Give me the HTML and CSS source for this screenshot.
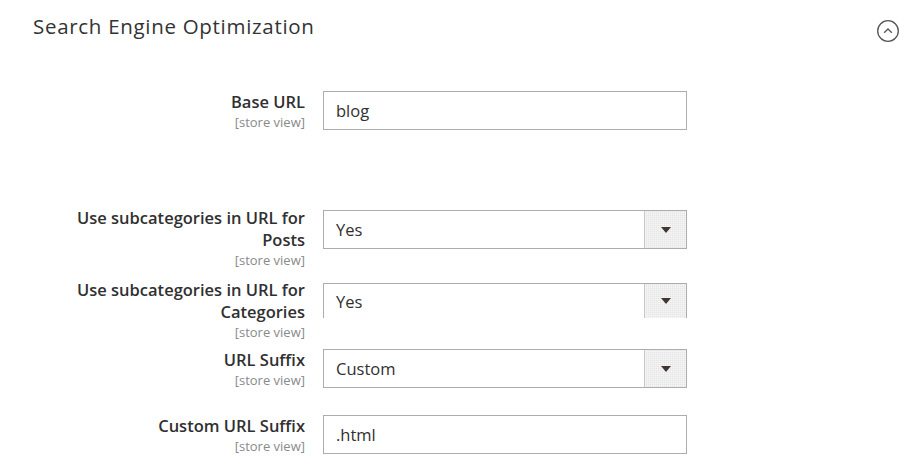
FILE: index.html
```html
<!DOCTYPE html>
<html lang="en">
<head>
<meta charset="utf-8">
<title>Search Engine Optimization</title>
<link rel="stylesheet" href="styles.css">
</head>
<body>
<section class="section">
  <header class="section-head">
    <h2 class="section-title">Search Engine Optimization</h2>
    <svg class="collapse-icon" width="24" height="24" viewBox="0 0 24 24" aria-hidden="true">
      <circle cx="12" cy="12" r="10.3" fill="none" stroke="#555" stroke-width="1.3"/>
      <path d="M8.2 13.8 L12 10 L15.8 13.8" fill="none" stroke="#555" stroke-width="1.3"/>
    </svg>
  </header>
  <div class="fields">
    <div class="row row-gap-xl">
      <div class="label"><span class="label-text">Base URL</span><span class="scope">[store view]</span></div>
      <div class="control"><div class="input">blog</div></div>
    </div>
    <div class="row row-gap-sm">
      <div class="label label-up"><span class="label-text">Use subcategories in URL for Posts</span><span class="scope">[store view]</span></div>
      <div class="control"><div class="select"><span class="select-value">Yes</span><span class="select-btn"><span class="arrow"></span></span></div></div>
    </div>
    <div class="row row-gap-xs">
      <div class="label label-up2"><span class="label-text">Use subcategories in URL for Categories</span><span class="scope">[store view]</span></div>
      <div class="control"><div class="select select-clipped"><span class="select-value">Yes</span><span class="select-btn"><span class="arrow"></span></span></div></div>
    </div>
    <div class="row row-gap-md">
      <div class="label"><span class="label-text">URL Suffix</span><span class="scope">[store view]</span></div>
      <div class="control"><div class="select"><span class="select-value">Custom</span><span class="select-btn"><span class="arrow"></span></span></div></div>
    </div>
    <div class="row">
      <div class="label"><span class="label-text">Custom URL Suffix</span><span class="scope">[store view]</span></div>
      <div class="control"><div class="input">.html</div></div>
    </div>
  </div>
</section>
</body>
</html>
```
FILE: styles.css
```css
html, body {
  margin: 0;
  padding: 0;
  background: #ffffff;
}
body {
  font-family: "Open Sans", "Liberation Sans", sans-serif;
  color: #303030;
}
.section {
  width: 910px;
}
.section-head {
  display: flex;
  align-items: flex-start;
  justify-content: space-between;
  padding: 12px 10px 0 33px;
  height: 35px;
}
.section-title {
  margin: 0;
  font-size: 20.5px;
  font-weight: 400;
  letter-spacing: 0.7px;
  color: #333333;
  line-height: 28px;
}
.collapse-icon {
  display: block;
  margin-top: 7px;
}
.fields {
  margin-top: 44px;
  margin-left: 65px;
}
.row {
  display: grid;
  grid-template-columns: 240px 364px;
  column-gap: 18px;
  align-items: start;
}
.row-gap-xl { margin-bottom: 80px; }
.row-gap-sm { margin-bottom: 15px; }
.row-gap-xs { margin-bottom: 8px; }
.row-gap-md { margin-bottom: 27px; }
.label {
  display: flex;
  flex-direction: column;
  align-items: flex-end;
  text-align: right;
}
.label-up {
  margin-top: -3px;
}
.label-up2 {
  margin-top: -4px;
  margin-bottom: 1px;
}
.label-text {
  font-size: 16.5px;
  font-weight: 600;
  line-height: 22px;
  color: #303030;
}
.scope {
  font-size: 13px;
  line-height: 16px;
  padding-top: 1px;
  color: #8a8a8a;
}
.input, .select {
  box-sizing: border-box;
  height: 39px;
  border: 1px solid #adadad;
  background: #fff;
  font-size: 16.5px;
  color: #303030;
  display: flex;
  align-items: center;
}
.input {
  padding-left: 12px;
}
.select-value {
  flex: 1;
  padding-left: 12px;
}
.select-clipped {
  height: 35px;
  border-bottom: none;
  align-items: stretch;
}
.select-clipped .select-value {
  display: flex;
  align-items: center;
  padding-top: 1px;
}
.select-btn {
  width: 41px;
  align-self: stretch;
  border-left: 1px solid #c8c8c8;
  background-color: #e6e6e6;
  background-image:
    linear-gradient(90deg, rgba(255,255,255,0.35) 50%, transparent 50%),
    linear-gradient(0deg, rgba(255,255,255,0.35) 50%, transparent 50%);
  background-size: 2px 2px;
  display: flex;
  align-items: center;
  justify-content: center;
}
.arrow {
  width: 0;
  height: 0;
  border-left: 5px solid transparent;
  border-right: 5px solid transparent;
  border-top: 6px solid #41362f;
}
```
